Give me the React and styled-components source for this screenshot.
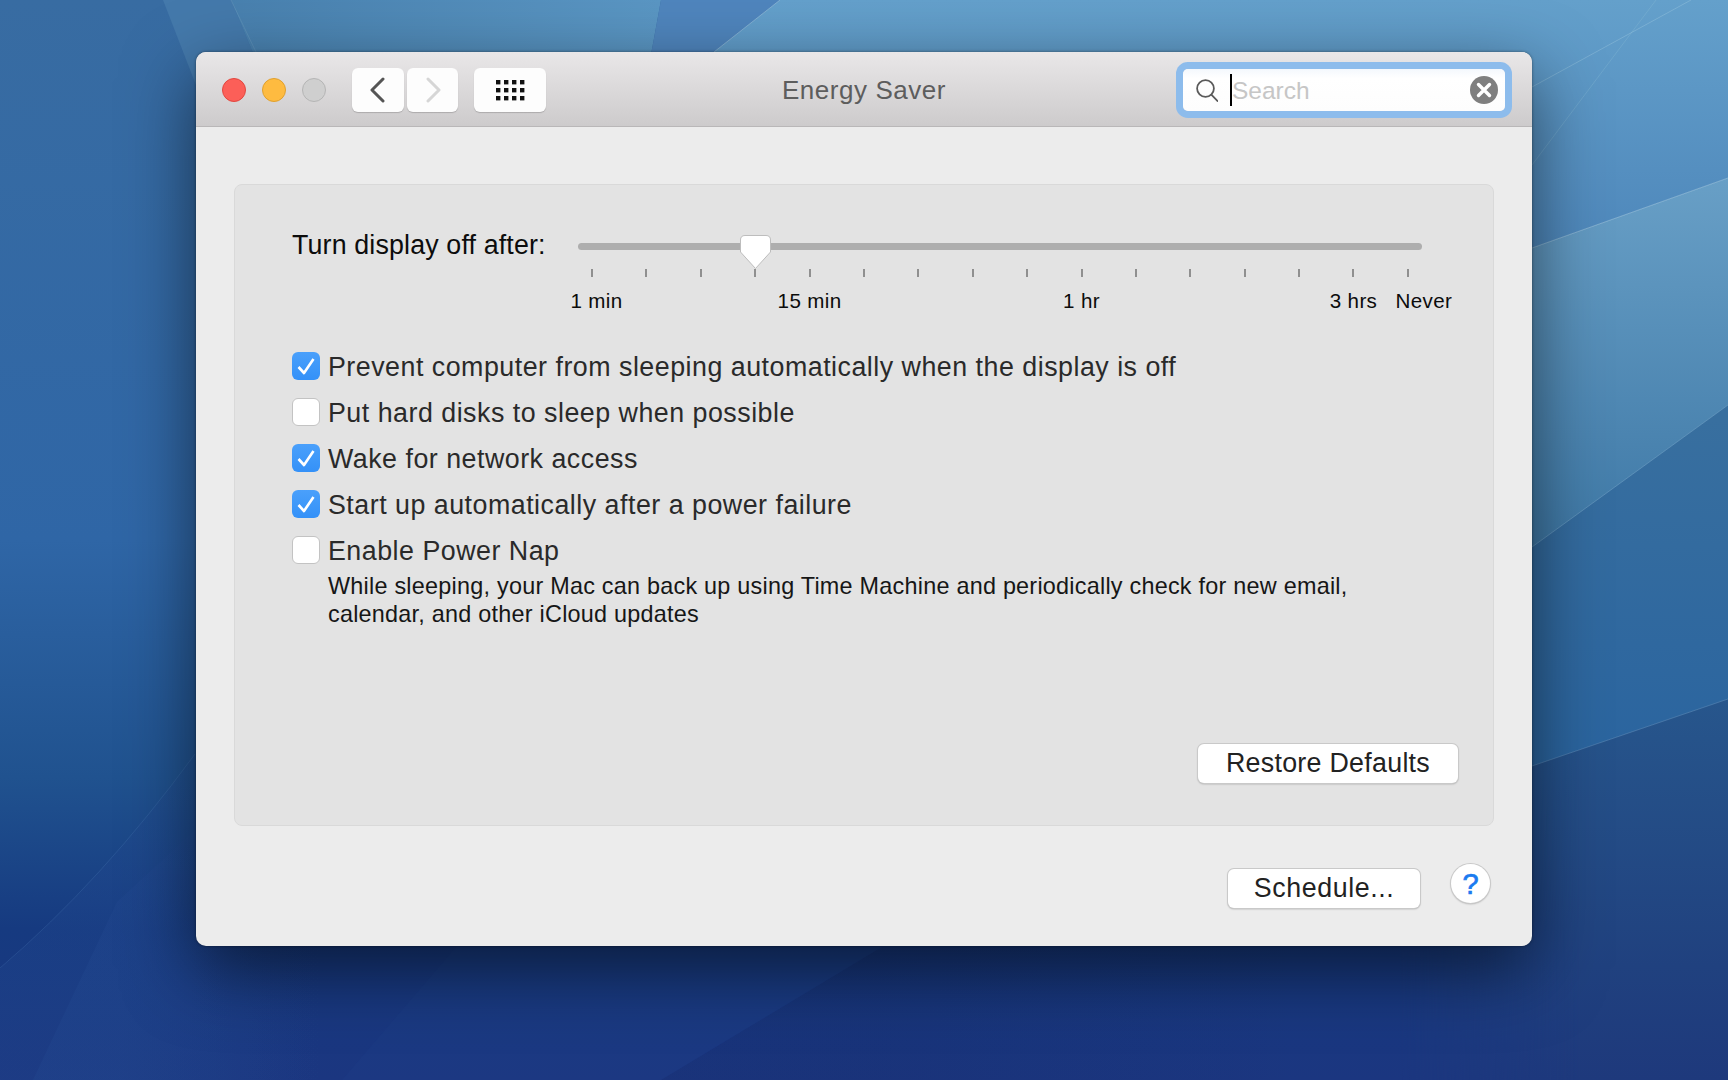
import React from "react";
import styled, { createGlobalStyle } from "styled-components";

const GlobalStyle = createGlobalStyle`
  html, body {
    margin: 0;
    padding: 0;
    height: 100%;
    overflow: hidden;
    background: #1b3a7e;
  }
  body {
    font-family: "Liberation Sans", Arial, sans-serif;
    -webkit-font-smoothing: antialiased;
  }
  * {
    box-sizing: border-box;
  }
`;

const Desktop = styled.div`
  position: relative;
  width: 1728px;
  height: 1080px;
  overflow: hidden;
  padding: 52px 0 0 196px;
`;

const WallpaperArt = styled.svg`
  position: absolute;
  inset: 0;
  width: 1728px;
  height: 1080px;
`;

const Window = styled.div`
  position: relative;
  width: 1336px;
  height: 894px;
  display: flex;
  flex-direction: column;
  background: #ececec;
  border-radius: 10px;
  box-shadow: 0 24px 70px rgba(0, 0, 0, 0.55), 0 0 3px rgba(0, 0, 0, 0.45);
  overflow: hidden;
`;

const TitleBar = styled.header`
  height: 75px;
  flex: none;
  display: grid;
  grid-template-columns: 1fr auto 1fr;
  align-items: center;
  padding: 2px 26px 0;
  background: linear-gradient(#e9e7e8, #cdcbcc);
  border-bottom: 1px solid #b9b7b8;
`;

const TitleLeft = styled.div`
  display: flex;
  align-items: center;
`;

const Lights = styled.div`
  display: flex;
  gap: 16px;
  margin-right: 26px;
`;

const Light = styled.span`
  width: 24px;
  height: 24px;
  border-radius: 50%;
  background: ${(p) => p.$color};
  border: 1px solid ${(p) => p.$edge};
`;

const ToolButton = styled.button`
  width: ${(p) => p.$width}px;
  height: 44px;
  margin-left: ${(p) => p.$gap || 0}px;
  padding: 0;
  display: flex;
  align-items: center;
  justify-content: center;
  border: none;
  border-radius: 6px;
  background: #fdfdfd;
  box-shadow: 0 1px 1px rgba(0, 0, 0, 0.18);
`;

const WindowTitle = styled.h1`
  margin: 0;
  font-size: 26px;
  font-weight: 400;
  letter-spacing: 0.55px;
  color: #5d5d5d;
`;

const SearchBox = styled.div`
  justify-self: end;
  width: 322px;
  height: 42px;
  margin-right: 1px;
  display: flex;
  align-items: center;
  padding: 0 7px 0 13px;
  border-radius: 5px;
  background: linear-gradient(#f4f8fd, #ffffff 22%, #fdfdfd);
  box-shadow: 0 0 0 7px #8dbcec;
`;

const Caret = styled.span`
  width: 2px;
  height: 32px;
  margin-left: 12px;
  background: #000;
  flex: none;
`;

const SearchHint = styled.span`
  flex: 1;
  padding-top: 2px;
  font-size: 24.5px;
  line-height: 32px;
  color: #c6c6c6;
`;

const Content = styled.main`
  flex: 1;
  display: flex;
  flex-direction: column;
  padding: 57px 38px 0;
`;

const Panel = styled.section`
  height: 642px;
  flex: none;
  display: flex;
  flex-direction: column;
  padding: 45px 35px 42px 57px;
  background: #e3e3e3;
  border: 1px solid #d9d9d9;
  border-radius: 8px;
`;

const SliderRow = styled.div`
  display: grid;
  grid-template-columns: 286px 844px;
  align-items: start;
`;

const SliderLabel = styled.div`
  font-size: 26.8px;
  line-height: 30px;
  letter-spacing: 0.15px;
  color: #0c0c0c;
  white-space: nowrap;
`;

const Slider = styled.div`
  padding-top: 13px;
`;

const Track = styled.div`
  position: relative;
  height: 7px;
  border-radius: 4px;
  background: #aeaeae;
`;

const Thumb = styled.svg`
  position: absolute;
  left: 162px;
  top: -8px;
  width: 31px;
  height: 34px;
  overflow: visible;
`;

const Ticks = styled.div`
  display: flex;
  justify-content: space-between;
  width: 818px;
  margin: 19px 0 0 13px;
`;

const Tick = styled.span`
  width: 2px;
  height: 8px;
  background: #8f8f8f;
`;

const ScaleLabels = styled.div`
  display: grid;
  grid-template-columns: repeat(16, 54.4px);
  margin: 12px 0 0 -13.2px;
`;

const ScaleLabel = styled.span`
  grid-column: ${(p) => p.$column};
  grid-row: 1;
  justify-self: center;
  font-size: 20.6px;
  line-height: 24px;
  letter-spacing: 0.35px;
  color: #0c0c0c;
  white-space: nowrap;
  transform: translateX(${(p) => p.$shift || 0}px);
`;

const Options = styled.div`
  margin-top: 30px;
  display: flex;
  flex-direction: column;
`;

const OptionRow = styled.label`
  height: 46px;
  display: flex;
  align-items: center;
  gap: 8px;
  font-size: 26.8px;
  letter-spacing: 0.5px;
  color: #2a2a2a;
  white-space: nowrap;
`;

const OptionText = styled.span`
  padding-top: 2px;
`;

const CheckBox = styled.span`
  width: 28px;
  height: 28px;
  flex: none;
  border-radius: 6px;
  background: ${(p) => (p.$checked ? "linear-gradient(#4aa0fb, #3491f8)" : "#fff")};
  border: ${(p) => (p.$checked ? "none" : "1px solid #c3c3c3")};
`;

const Description = styled.p`
  margin: 0 0 0 36px;
  width: 1060px;
  font-size: 23.4px;
  line-height: 27.5px;
  letter-spacing: 0.24px;
  color: #161616;
`;

const PushButton = styled.button`
  width: ${(p) => p.$width}px;
  height: 39px;
  padding: 0;
  font-family: inherit;
  font-size: 26.8px;
  line-height: 37px;
  letter-spacing: ${(p) => p.$tracking}px;
  color: #222;
  background: #fff;
  border: none;
  border-radius: 6px;
  box-shadow: 0 0 0 1px #c9c9c9, 0 1px 2px rgba(0, 0, 0, 0.35);
`;

const PanelActions = styled.div`
  margin-top: auto;
  display: flex;
  justify-content: flex-end;
`;

const Footer = styled.footer`
  display: flex;
  justify-content: flex-end;
  align-items: flex-start;
  gap: 31px;
  padding: 38px 4px 0 0;
`;

const ScheduleButton = styled(PushButton)`
  margin-top: 5px;
`;

const HelpButton = styled.button`
  width: 39px;
  height: 39px;
  padding: 0;
  border: none;
  border-radius: 50%;
  background: #fff;
  font-family: inherit;
  font-size: 29px;
  font-weight: 400;
  line-height: 36px;
  color: #197bf0;
  -webkit-text-stroke: 0.7px #197bf0;
  box-shadow: 0 0 0 1px #c9c9c9, 0 1px 2px rgba(0, 0, 0, 0.35);
`;

const options = [
  { label: "Prevent computer from sleeping automatically when the display is off", checked: true },
  { label: "Put hard disks to sleep when possible", checked: false },
  { label: "Wake for network access", checked: true },
  { label: "Start up automatically after a power failure", checked: true },
  { label: "Enable Power Nap", checked: false },
];

const scaleLabels = [
  { text: "1 min", column: 1, shift: 4.5 },
  { text: "15 min", column: 5 },
  { text: "1 hr", column: 10 },
  { text: "3 hrs", column: 15 },
  { text: "Never", column: 16, shift: 16 },
];

function Wallpaper() {
  return (
    <WallpaperArt viewBox="0 0 1728 1080" preserveAspectRatio="none">
      <defs>
        <linearGradient id="base" x1="0" y1="0" x2="0" y2="1">
          <stop offset="0" stopColor="#386ca2" />
          <stop offset="0.5" stopColor="#2f66a6" />
          <stop offset="0.72" stopColor="#20528f" />
          <stop offset="0.86" stopColor="#163a80" />
          <stop offset="1" stopColor="#1b3680" />
        </linearGradient>
        <linearGradient id="topBand" x1="200" y1="0" x2="660" y2="0" gradientUnits="userSpaceOnUse">
          <stop offset="0" stopColor="#477fad" />
          <stop offset="1" stopColor="#5a96c3" />
        </linearGradient>
        <linearGradient id="topRight" x1="0" y1="0" x2="0" y2="260" gradientUnits="userSpaceOnUse">
          <stop offset="0" stopColor="#64a0cb" />
          <stop offset="1" stopColor="#4d86ba" />
        </linearGradient>
        <linearGradient id="midLight" x1="0" y1="180" x2="0" y2="550" gradientUnits="userSpaceOnUse">
          <stop offset="0" stopColor="#689fc6" />
          <stop offset="1" stopColor="#3e78a6" />
        </linearGradient>
        <linearGradient id="midDark" x1="0" y1="420" x2="0" y2="770" gradientUnits="userSpaceOnUse">
          <stop offset="0" stopColor="#386f9f" />
          <stop offset="1" stopColor="#2a649f" />
        </linearGradient>
        <linearGradient id="lowDark" x1="0" y1="700" x2="0" y2="1080" gradientUnits="userSpaceOnUse">
          <stop offset="0" stopColor="#27568c" />
          <stop offset="0.7" stopColor="#20417f" />
          <stop offset="1" stopColor="#1e397c" />
        </linearGradient>
        <linearGradient id="rightFade" x1="1380" y1="0" x2="1580" y2="0" gradientUnits="userSpaceOnUse">
          <stop offset="0" stopColor="#000" />
          <stop offset="1" stopColor="#fff" />
        </linearGradient>
        <mask id="rightMask">
          <rect width="1728" height="1080" fill="url(#rightFade)" />
        </mask>
        <linearGradient id="sweepFade" x1="120" y1="0" x2="320" y2="0" gradientUnits="userSpaceOnUse">
          <stop offset="0" stopColor="#22488f" stopOpacity="1" />
          <stop offset="1" stopColor="#22488f" stopOpacity="0" />
        </linearGradient>
        <linearGradient id="centerShade" x1="880" y1="0" x2="1300" y2="0" gradientUnits="userSpaceOnUse">
          <stop offset="0" stopColor="#101c50" stopOpacity="0.12" />
          <stop offset="1" stopColor="#101c50" stopOpacity="0" />
        </linearGradient>
      </defs>
      <rect width="1728" height="1080" fill="url(#base)" />
      <path d="M163,0 L231,0 L256,60 L196,85 Z" fill="#4479ab" />
      <path d="M231,0 L661,0 L650,60 L256,60 Z" fill="url(#topBand)" />
      <path d="M661,0 L780,0 L714,52 L714,60 L650,60 Z" fill="#4f85bd" />
      <path d="M780,0 L1728,0 L1728,178 L1400,295 L714,295 L714,52 Z" fill="url(#topRight)" />
      <path d="M1728,178 L1400,295 L1400,600 L1532,547 L1728,405 Z" fill="url(#midLight)" />
      <path d="M1728,405 L1532,547 L1400,600 L1400,797 L1532,766 L1728,699 Z" fill="url(#midDark)" />
      <path d="M1728,699 L1532,766 L1400,797 L1400,1080 L1728,1080 Z" fill="url(#lowDark)" mask="url(#rightMask)" />
      <path d="M0,968 Q102,881 195,754 L320,754 L320,1080 L0,1080 Z" fill="url(#sweepFade)" opacity="0.3" />
      <path d="M33,1080 L117,902 L195,830 L320,830 L320,1080 Z" fill="url(#sweepFade)" opacity="0.35" />
      <path d="M456,947 L882,947 L661,1080 L342,1080 Z" fill="#3a6ab8" opacity="0.05" />
      <path d="M882,947 L1300,947 L1300,1080 L661,1080 Z" fill="url(#centerShade)" />
      <path d="M0,968 Q102,881 195,754" fill="none" stroke="#5b8ec4" strokeOpacity="0.2" />
      <path d="M780,0 L714,52" fill="none" stroke="#a5cbe2" strokeOpacity="0.55" />
      <path d="M231,0 L256,52" fill="none" stroke="#86b0cd" strokeOpacity="0.25" />
      <path d="M1532,87 L1691,0" fill="none" stroke="#a5cfe2" strokeOpacity="0.35" />
      <path d="M1532,165 L1656,0" fill="none" stroke="#8fc0d8" strokeOpacity="0.3" />
      <path d="M1532,248 L1728,178" fill="none" stroke="#b6d6e8" strokeOpacity="0.45" />
      <path d="M1532,547 L1728,405" fill="none" stroke="#8fbcd4" strokeOpacity="0.4" />
      <path d="M1532,766 L1728,699" fill="none" stroke="#6f9cc4" strokeOpacity="0.45" />
    </WallpaperArt>
  );
}

function Chevron({ flip, color }) {
  return (
    <svg width="16" height="26" viewBox="0 0 16 26">
      <path
        d={flip ? "M3 2 L14 13 L3 24" : "M13 2 L2 13 L13 24"}
        fill="none"
        stroke={color}
        strokeWidth="3"
        strokeLinecap="round"
        strokeLinejoin="round"
      />
    </svg>
  );
}

function GridIcon() {
  const cells = [];
  for (let row = 0; row < 3; row++) {
    for (let col = 0; col < 4; col++) {
      cells.push(<rect key={row + "-" + col} x={col * 8} y={row * 8} width="4.4" height="4.4" fill="#111" />);
    }
  }
  return (
    <svg width="29" height="21" viewBox="0 0 29 21">
      {cells}
    </svg>
  );
}

function SearchIcon() {
  return (
    <svg width="22" height="23" viewBox="0 0 22 23" style={{ flex: "none" }}>
      <circle cx="9.5" cy="9.5" r="8.4" fill="none" stroke="#5a5a5a" strokeWidth="1.8" />
      <path d="M15.6 15.8 L21.4 22" stroke="#5a5a5a" strokeWidth="1.8" strokeLinecap="round" />
    </svg>
  );
}

function ClearIcon() {
  return (
    <svg width="28" height="28" viewBox="0 0 28 28" style={{ flex: "none" }}>
      <circle cx="14" cy="14" r="14" fill="#7f7f7f" />
      <path d="M8.5 8.5 L19.5 19.5 M19.5 8.5 L8.5 19.5" stroke="#fff" strokeWidth="3.4" strokeLinecap="round" />
    </svg>
  );
}

function CheckMark() {
  return (
    <svg width="28" height="28" viewBox="0 0 28 28">
      <path d="M6.5 15 L12 21 L21.5 7" fill="none" stroke="#fff" strokeWidth="2.6" strokeLinejoin="round" />
    </svg>
  );
}

export default function App() {
  return (
    <>
      <GlobalStyle />
      <Desktop>
        <Wallpaper />
        <Window>
          <TitleBar>
            <TitleLeft>
              <Lights>
                <Light $color="#fc5f58" $edge="#e2473f" />
                <Light $color="#febb40" $edge="#e0a02e" />
                <Light $color="#cfcfcf" $edge="#b5b5b5" />
              </Lights>
              <ToolButton $width={52}>
                <Chevron color="#555" />
              </ToolButton>
              <ToolButton $width={51} $gap={3}>
                <Chevron flip color="#d6d6d6" />
              </ToolButton>
              <ToolButton $width={72} $gap={16}>
                <GridIcon />
              </ToolButton>
            </TitleLeft>
            <WindowTitle>Energy Saver</WindowTitle>
            <SearchBox>
              <SearchIcon />
              <Caret />
              <SearchHint>Search</SearchHint>
              <ClearIcon />
            </SearchBox>
          </TitleBar>
          <Content>
            <Panel>
              <SliderRow>
                <SliderLabel>Turn display off after:</SliderLabel>
                <Slider>
                  <Track>
                    <Thumb viewBox="0 0 31 34">
                      <path
                        d="M5 0.5 H26 Q30.5 0.5 30.5 5 V17 L15.5 33.5 L0.5 17 V5 Q0.5 0.5 5 0.5 Z"
                        fill="#fff"
                        stroke="#bdbdbd"
                      />
                    </Thumb>
                  </Track>
                  <Ticks>
                    {Array.from({ length: 16 }, (_, i) => (
                      <Tick key={i} />
                    ))}
                  </Ticks>
                  <ScaleLabels>
                    {scaleLabels.map((item) => (
                      <ScaleLabel key={item.text} $column={item.column} $shift={item.shift}>
                        {item.text}
                      </ScaleLabel>
                    ))}
                  </ScaleLabels>
                </Slider>
              </SliderRow>
              <Options>
                {options.map((option) => (
                  <OptionRow key={option.label}>
                    <CheckBox $checked={option.checked}>{option.checked && <CheckMark />}</CheckBox>
                    <OptionText>{option.label}</OptionText>
                  </OptionRow>
                ))}
                <Description>
                  While sleeping, your Mac can back up using Time Machine and periodically check for new email,
                  calendar, and other iCloud updates
                </Description>
              </Options>
              <PanelActions>
                <PushButton $width={260} $tracking={0.28}>
                  Restore Defaults
                </PushButton>
              </PanelActions>
            </Panel>
            <Footer>
              <ScheduleButton $width={192} $tracking={0.6}>
                Schedule...
              </ScheduleButton>
              <HelpButton>?</HelpButton>
            </Footer>
          </Content>
        </Window>
      </Desktop>
    </>
  );
}
